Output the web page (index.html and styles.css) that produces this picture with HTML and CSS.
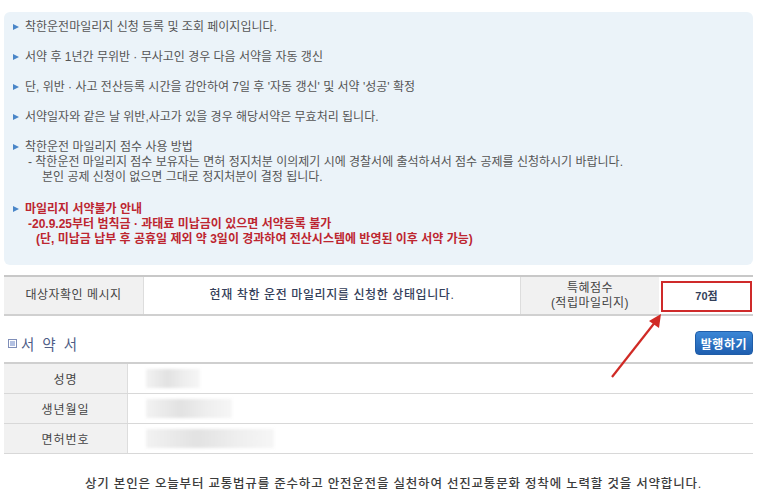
FILE: index.html
```html
<!DOCTYPE html>
<html lang="ko">
<head>
    <meta charset="UTF-8">
    <title>착한운전 마일리지</title>
    <link rel="stylesheet" href="styles.css">
</head>
<body>
    <div class="page">
        <!-- 안내 박스 -->
        <div class="notice">
            <p class="item">착한운전마일리지 신청 등록 및 조회 페이지입니다.</p>
            <p class="item">서약 후 1년간 무위반 · 무사고인 경우 다음 서약을 자동 갱신</p>
            <p class="item">단, 위반 · 사고 전산등록 시간을 감안하여 7일 후 '자동 갱신' 및 서약 '성공' 확정</p>
            <p class="item">서약일자와 같은 날 위반,사고가 있을 경우 해당서약은 무효처리 됩니다.</p>
            <div class="item">
                착한운전 마일리지 점수 사용 방법
                <div class="sub">- 착한운전 마일리지 점수 보유자는 면허 정지처분 이의제기 시에 경찰서에 출석하셔서 점수 공제를 신청하시기 바랍니다.</div>
                <div class="sub sub2">본인 공제 신청이 없으면 그대로 정지처분이 결정 됩니다.</div>
            </div>
            <div class="item warn">
                마일리지 서약불가 안내
                <div class="sub">-20.9.25부터 범칙금 · 과태료 미납금이 있으면 서약등록 불가</div>
                <div class="sub sub3">(단, 미납금 납부 후 공휴일 제외 약 3일이 경과하여 전산시스템에 반영된 이후 서약 가능)</div>
            </div>
        </div>

        <!-- 대상자 확인 -->
        <div class="check-wrap">
            <table class="check">
                <tr>
                    <th class="c1">대상자확인 메시지</th>
                    <td class="c2">현재 착한 운전 마일리지를 신청한 상태입니다.</td>
                    <th class="c3">특혜점수<br>(적립마일리지)</th>
                    <td class="c4"><span class="score">70점</span></td>
                </tr>
            </table>

            <svg class="arrow" width="56" height="68" viewBox="0 0 56 68">
                <line x1="4" y1="65" x2="48" y2="9" stroke="#d02a25" stroke-width="2.2" />
                <polygon points="53,2 51,16 41,9" fill="#d02a25" />
            </svg>
        </div>

        <!-- 서약서 -->
        <div class="pledge-head">
            <h2><span class="sq"></span>서 약 서</h2>
            <button class="btn">발행하기</button>
        </div>

        <table class="pledge">
            <tr>
                <th>성명</th>
                <td><span class="blur" style="width:54px"></span></td>
            </tr>
            <tr>
                <th>생년월일</th>
                <td><span class="blur" style="width:86px"></span></td>
            </tr>
            <tr>
                <th>면허번호</th>
                <td><span class="blur" style="width:128px"></span></td>
            </tr>
        </table>

        <p class="oath">상기 본인은 오늘부터 교통법규를 준수하고 안전운전을 실천하여 선진교통문화 정착에 노력할 것을 서약합니다.</p>
    </div>
</body>
</html>
```

FILE: styles.css
```css
body {
    margin: 0;
    padding: 0;
    background: #fff;
    font-family: "Liberation Sans", "Noto Sans CJK KR", sans-serif;
    color: #555;
}

.page {
    width: 749px;
    padding: 12px 12px 0 4px;
}

.notice {
    background-color: #ebf3f9;
    border-radius: 6px;
    padding: 8px 10px 18px 8px;
    font-size: 12px;
    line-height: 15px;
}

.notice .item {
    position: relative;
    margin: 0 0 15px 0;
    padding-left: 13px;
}

.notice .item:last-child {
    margin-bottom: 0;
}

.notice .item::before {
    content: "";
    position: absolute;
    left: 1px;
    top: 4px;
    border-left: 6px solid #4a86c8;
    border-top: 3.5px solid transparent;
    border-bottom: 3.5px solid transparent;
}

.notice .item.warn {
    margin-top: 17px;
}

.notice .sub {
    padding-left: 3px;
}

.notice .sub2 {
    padding-left: 17px;
}

.notice .sub3 {
    padding-left: 11px;
}

.warn {
    color: #bd2630;
    font-weight: bold;
}

.check-wrap {
    position: relative;
    margin-top: 10px;
}

table {
    border-collapse: collapse;
    width: 749px;
}

.check {
    border-top: 2px solid #c8c8c8;
    border-bottom: 2px solid #d0d0d0;
    font-size: 12px;
}

.check th, .check td {
    height: 34px;
    padding: 0;
    text-align: center;
    line-height: 15px;
}

.check th {
    background-color: #f1f1f1;
    color: #444;
    font-weight: normal;
    letter-spacing: 0.5px;
}

.check .c1 {
    width: 139px;
    border-right: 1px solid #ddd;
}

.check .c2 {
    width: 376px;
    color: #34405a;
    letter-spacing: 0.6px;
    font-weight: 500;
}

.check .c3 {
    width: 138px;
    border-left: 1px solid #ddd;
}

.check .c4 {
    padding: 2px 1px 1px 2px;
}

.score {
    display: block;
    height: 27px;
    line-height: 27px;
    border: 2px solid #cf2a2a;
    color: #34405a;
    font-size: 11px;
    font-weight: bold;
}

.arrow {
    position: absolute;
    left: 604px;
    top: 37px;
}

.pledge-head {
    display: flex;
    justify-content: space-between;
    align-items: center;
    margin-top: 15px;
    height: 24px;
}

.pledge-head h2 {
    margin: 0 0 0 4px;
    font-size: 14.5px;
    font-weight: normal;
    color: #4e5c86;
    letter-spacing: 2px;
    display: flex;
    align-items: center;
}

.sq {
    display: inline-block;
    width: 7px;
    height: 7px;
    border: 1px solid #7f8eb8;
    background: #b3c1e2;
    box-shadow: inset 0 0 0 1px #fff;
    margin-right: 4px;
}

.btn {
    height: 24px;
    padding: 0 5px;
    border: 1px solid #1f5da8;
    border-radius: 4px;
    background: linear-gradient(#3a86d6, #1f5fb0);
    color: #fff;
    font-family: inherit;
    font-size: 12px;
    font-weight: bold;
    letter-spacing: 0.5px;
}

.pledge {
    margin-top: 7px;
    border-top: 2px solid #cfcfcf;
    border-bottom: 1px solid #cfcfcf;
    font-size: 12px;
}

.pledge th, .pledge td {
    height: 29px;
    padding: 0;
    border-bottom: 1px solid #d8d8d8;
}

.pledge th {
    width: 123px;
    background-color: #f1f1f1;
    color: #444;
    font-weight: normal;
    letter-spacing: 1px;
    border-right: 1px solid #ddd;
}

.pledge td {
    padding-left: 18px;
}

.blur {
    display: block;
    height: 19px;
    background: linear-gradient(90deg, #f2f2f2, #e2e2e2 40%, #eeeeee 70%, #f6f6f6);
    filter: blur(1.5px);
}

.oath {
    margin: 19px 0 0 0;
    padding-left: 30px;
    text-align: center;
    font-size: 12.5px;
    font-weight: 500;
    color: #3c3c3c;
    letter-spacing: 0.8px;
}
```
